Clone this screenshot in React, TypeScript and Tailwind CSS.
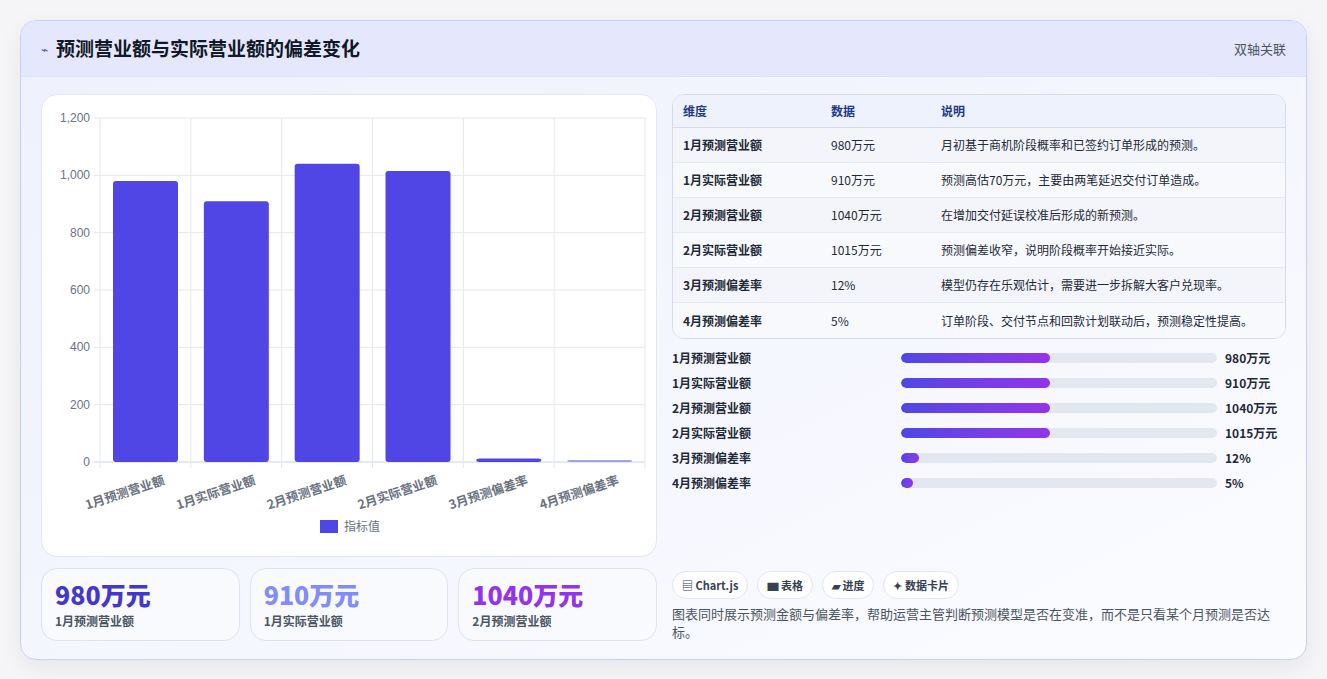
import React from "react";

const F = { fontFamily: '"Noto Sans CJK SC", "Liberation Sans", sans-serif' };

const rows = [
  ["1月预测营业额", "980万元", "月初基于商机阶段概率和已签约订单形成的预测。"],
  ["1月实际营业额", "910万元", "预测高估70万元，主要由两笔延迟交付订单造成。"],
  ["2月预测营业额", "1040万元", "在增加交付延误校准后形成的新预测。"],
  ["2月实际营业额", "1015万元", "预测偏差收窄，说明阶段概率开始接近实际。"],
  ["3月预测偏差率", "12%", "模型仍存在乐观估计，需要进一步拆解大客户兑现率。"],
  ["4月预测偏差率", "5%", "订单阶段、交付节点和回款计划联动后，预测稳定性提高。"],
];
const vals = [980, 910, 1040, 1015, 12, 5];
const fills = [149, 149, 149, 149, 18, 12];

function Chart() {
  const L = 58, T = 23, R = 603, B = 367;
  const step = (R - L) / 6;
  const y = (v: number) => B - (v / 1200) * (B - T);
  return (
    <svg width="616" height="461" className="block">
      {[0, 200, 400, 600, 800, 1000, 1200].map((v) => (
        <g key={v}>
          <line x1={L - 6} x2={R} y1={y(v)} y2={y(v)} stroke={v === 0 ? "#cbd5e1" : "#e5e7eb"} />
          <text x={L - 10} y={y(v) + 4} textAnchor="end" fontSize="12" fill="#6b7280" fontFamily="Liberation Sans, sans-serif">
            {v.toLocaleString("en-US")}
          </text>
        </g>
      ))}
      {Array.from({ length: 7 }).map((_, i) => (
        <line key={i} x1={L + i * step} x2={L + i * step} y1={T} y2={B + 6} stroke="#e5e7eb" />
      ))}
      {vals.map((v, i) => {
        const x = L + i * step + 13;
        const h = Math.max(B - y(v), 2);
        return <rect key={i} x={x} y={B - h} width={65} height={h} rx={3} fill={i === 5 ? "#a5a1ee" : "#4f46e5"} />;
      })}
      {rows.map((r, i) => {
        const cx = L + i * step + step / 2 + 20;
        return (
          <text key={i} x={cx} y={B + 22} textAnchor="end" fontSize="12.5" fontWeight="700" fill="#6b7280"
            transform={`rotate(-18 ${cx} ${B + 22})`} style={F}>
            {r[0]}
          </text>
        );
      })}
      <rect x={278} y={425} width={18} height={13} fill="#4f46e5" />
      <text x={302} y={436} fontSize="12" fill="#6b7280" style={F}>指标值</text>
    </svg>
  );
}

export default function App() {
  return (
    <div className="min-h-[679px] bg-[#f5f5f7] p-5" style={F}>
      <div className="rounded-2xl border border-[#c9cff0] bg-gradient-to-br from-[#eef0fd] to-[#fbfcff] overflow-hidden shadow-[0_8px_24px_rgba(0,0,0,0.06)]">
        <div className="h-[56px] flex items-center justify-between px-5 bg-[#e5e8fc] border-b border-[#dfe3f6]">
          <div className="flex items-center gap-2">
            <span className="text-[#4f46e5] text-xs">⌁</span>
            <span className="text-[19px] font-bold text-[#111827]">预测营业额与实际营业额的偏差变化</span>
          </div>
          <span className="text-[13px] text-[#4b5563]">双轴关联</span>
        </div>
        <div className="flex gap-[15px] px-5 pt-[17px] pb-[18px]">
          <div className="w-[616px] flex flex-col gap-[11px]">
            <div className="rounded-2xl bg-white border border-[#e3e7f1]">
              <Chart />
            </div>
            <div className="grid grid-cols-3 gap-[10px]">
              {[["980万元", "text-[#4338ca]", "1月预测营业额"], ["910万元", "text-[#818cf8]", "1月实际营业额"], ["1040万元", "text-[#9333ea]", "2月预测营业额"]].map(([v, c, l]) => (
                <div key={l} className="h-[73px] rounded-2xl border border-[#dde3f1] bg-[#f9fafe] px-[13px] pt-[9px]">
                  <div className={`text-[25px] font-extrabold leading-[32px] ${c}`}>{v}</div>
                  <div className="text-[12px] font-bold text-[#4b5563] mt-[2px]">{l}</div>
                </div>
              ))}
            </div>
          </div>
          <div className="flex-1 flex flex-col">
            <div className="rounded-xl border border-[#d5dbea] overflow-hidden bg-white">
              <div className="grid grid-cols-[148px_110px_1fr] h-[33px] items-center px-[10px] bg-[#eef2fd] border-b border-[#d5dbea] text-[12px] font-bold text-[#1e3a8a]">
                <div>维度</div><div>数据</div><div>说明</div>
              </div>
              {rows.map((r, i) => (
                <div key={i} className={`grid grid-cols-[148px_110px_1fr] h-[35px] items-center px-[10px] text-[12px] text-[#1f2937] ${i < 5 ? "border-b border-[#e5e9f2]" : ""} ${i % 2 ? "bg-[#f7f9fd]" : "bg-[#f3f5fb]"}`}>
                  <div className="font-bold">{r[0]}</div><div>{r[1]}</div><div>{r[2]}</div>
                </div>
              ))}
            </div>
            <div className="mt-[10px] flex flex-col gap-[7px]">
              {rows.map((r, i) => (
                <div key={i} className="flex items-center h-[18px] text-[12px] font-bold text-[#1f2937]">
                  <div className="w-[229px]">{r[0]}</div>
                  <div className="w-[316px] h-[10px] rounded-full bg-[#e2e7f0] overflow-hidden">
                    <div className="h-full rounded-full bg-gradient-to-r from-[#4f46e5] to-[#9333ea]" style={{ width: fills[i] }} />
                  </div>
                  <div className="ml-2">{r[1]}</div>
                </div>
              ))}
            </div>
            <div className="mt-auto flex gap-[9px]">
              {["▤ Chart.js", "▆ 表格", "▰ 进度", "✦ 数据卡片"].map((t) => (
                <span key={t} className="h-[28px] px-[9px] flex items-center rounded-full border border-[#e3e6ee] bg-white text-[11px] font-bold text-[#374151]">{t}</span>
              ))}
            </div>
            <p className="mt-[6px] text-[13px] leading-[18px] text-[#4b5563]">图表同时展示预测金额与偏差率，帮助运营主管判断预测模型是否在变准，而不是只看某个月预测是否达标。</p>
          </div>
        </div>
      </div>
    </div>
  );
}
